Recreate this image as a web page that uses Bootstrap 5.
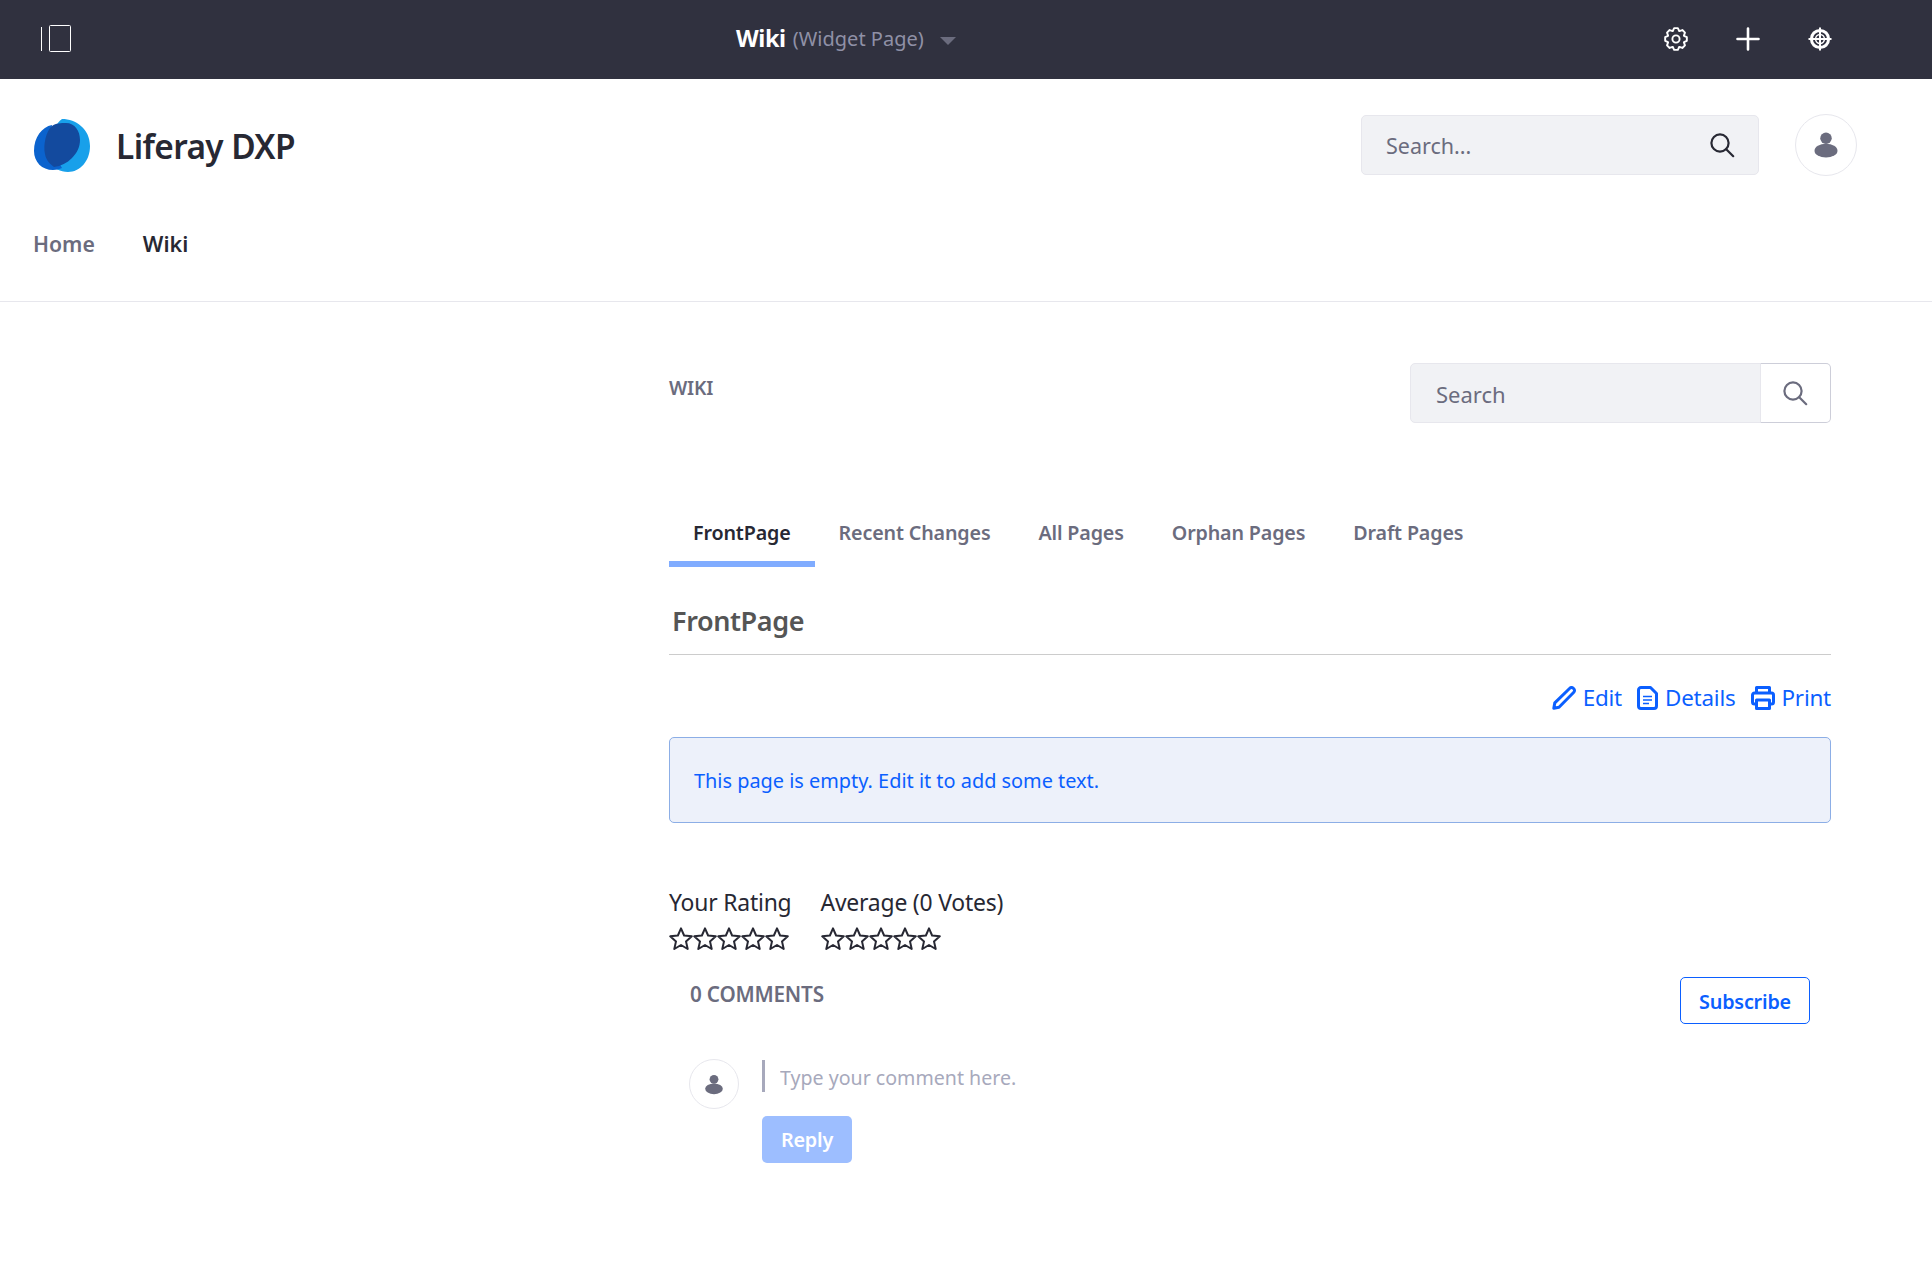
<!DOCTYPE html>
<html lang="en">
<head>
    <meta charset="UTF-8">
    <title>Wiki - Liferay DXP</title>
    <link href="https://cdn.jsdelivr.net/npm/bootstrap@5.3.0/dist/css/bootstrap.min.css" rel="stylesheet">
    <script src="https://cdn.jsdelivr.net/npm/bootstrap@5.3.0/dist/js/bootstrap.bundle.min.js"></script>
    <style>
        body {
            font-family: "Noto Sans", "Open Sans", sans-serif;
            font-size: 20px;
            color: #272833;
            background: #fff;
        }
        .admin-bar {
            height: 79px;
            background: #30313f;
            padding: 0 100px 1px 41px;
        }
        .admin-toggle { width: 695px; }
        .admin-title { color: #fff; font-weight: 700; font-size: 23.5px; letter-spacing: -.4px; }
        .admin-sub { color: #8f90a6; font-size: 20px; margin-left: 7px; }
        .admin-caret {
            width: 0;
            height: 0;
            margin-left: 16px;
            margin-top: 3px;
            border-left: 8px solid transparent;
            border-right: 8px solid transparent;
            border-top: 8px solid #6b6c7e;
        }
        .admin-icons { gap: 48px; }
        .site-header {
            height: 223px;
            border-bottom: 1px solid #e7e7ed;
            padding: 35px 75px 0 34px;
        }
        .site-top { height: 62px; }
        .site-name { font-size: 33.4px; font-weight: 600; margin: 3px 0 0 26px; letter-spacing: -.6px; color: #272833; }
        .search-field {
            width: 398px;
            height: 60px;
            background: #f1f2f5;
            border: 1px solid #e7e7ed;
            border-radius: 5px;
            padding: 0 23px 0 24px;
            margin-right: 36px;
            color: #6b6c7e;
        }
        .avatar-ring {
            width: 62px;
            height: 62px;
            border-radius: 50%;
            border: 1px solid #e7e7ed;
            background: #fff;
        }
        .avatar-ring.avatar-small { width: 50px; height: 50px; }
        .site-nav { margin: 53px 0 0 -1px; gap: 48px; }
        .site-nav .nav-link { padding: 0; color: #6b6c7e; font-weight: 600; font-size: 21.2px; line-height: 30px; }
        .site-nav .nav-link.active { color: #272833; font-size: 21.6px; }
        .wiki-main { padding: 61px 101px 100px 669px; }
        .wiki-label { font-size: 19.2px; font-weight: 600; color: #6b6c7e; line-height: 50px; letter-spacing: -.2px; }
        .wiki-search { width: 421px; height: 60px; }
        .wiki-search .form-control {
            background: #f1f2f5;
            border-color: #e7e7ed;
            border-radius: 5px 0 0 5px;
            padding: 2px 0 0 25px;
            font-size: 22px;
            color: #6b6c7e;
            box-shadow: none;
        }
        .wiki-search .form-control::placeholder,
        .search-field .form-control::placeholder { color: #6b6c7e; opacity: 1; }
        .search-field .form-control {
            background: transparent;
            border: 0;
            padding: 2px 0 0;
            font-size: 21.5px;
            box-shadow: none;
        }
        .wiki-search .btn {
            width: 71px;
            padding: 0 2px 0 0;
            border: 1px solid #cdced9;
            border-left-color: #e7e7ed;
            border-radius: 0 5px 5px 0;
            background: #fff;
        }
        .wiki-tabs { margin-top: 78px; }
        .wiki-tabs .nav-link {
            padding: 17px 24px 13px;
            line-height: 30px;
            border-bottom: 6px solid transparent;
            border-radius: 0;
            color: #6b6c7e;
            font-weight: 600;
            font-size: 19.7px;
            letter-spacing: -.15px;
        }
        .wiki-tabs .nav-link.active { color: #272833; border-bottom-color: #80acff; }
        .page-title {
            margin: 0;
            padding: 35px 3px 14px;
            line-height: 38px;
            font-size: 27px;
            font-weight: 600;
            letter-spacing: -.4px;
            color: #555;
            border-bottom: 1px solid #ccc;
        }
        .page-actions { margin-top: 26px; height: 34px; gap: 15px; }
        .page-actions a { color: #0b5fff; text-decoration: none; gap: 7px; font-size: 22.4px; letter-spacing: -.2px; line-height: 34px; }
        .empty-note {
            margin: 22px 0 0;
            height: 86px;
            padding: 1px 24px 0;
            background: #edf1fa;
            border: 1px solid #8caee6;
            border-radius: 5px;
            color: #0b5fff;
            font-size: 19.9px;
        }
        .rating-row { margin-top: 65px; gap: 29px; }
        .rating-label { font-size: 22.9px; line-height: 30px; letter-spacing: -.2px; }
        .rating-stars { margin-top: 9px; height: 24px; }
        .comments-row { margin-top: 26px; padding: 0 21px; }
        .comments-count { font-size: 20.7px; font-weight: 600; color: #6b6c7e; line-height: 30px; margin-top: 2px; letter-spacing: -.2px; }
        .btn-subscribe {
            width: 130px;
            height: 47px;
            padding: 2px 0 0;
            border: 1px solid #0b5fff;
            border-radius: 5px;
            color: #0b5fff;
            font-weight: 600;
            font-size: 19.8px;
            letter-spacing: -.2px;
            background: #fff;
        }
        .comment-box { margin-top: 35px; padding-left: 20px; }
        .comment-body { margin-left: 23px; }
        .comment-field {
            width: 400px;
            height: 32px;
            margin-top: 1px;
            padding: 2px 0 0 15px;
            border: 0;
            border-left: 3px solid #a7a9bc;
            border-radius: 0;
            font-size: 19.6px;
            line-height: 30px;
            box-shadow: none;
        }
        .comment-field::placeholder { color: #a7a9bc; opacity: 1; }
        .btn-reply,
        .btn-reply:disabled {
            display: block;
            width: 90px;
            height: 47px;
            margin-top: 24px;
            padding: 0;
            border: 0;
            border-radius: 5px;
            background: #9dbeff;
            color: #fff;
            font-weight: 600;
            font-size: 19.8px;
            letter-spacing: -.2px;
            opacity: 1;
        }
    </style>
</head>
<body>
    <svg width="0" height="0" class="d-none">
        <symbol id="ico-star" viewBox="0 0 24 24">
            <path d="M12 1.4l3.1 7.1 7.7.8-5.8 5.1 1.7 7.6-6.7-4-6.7 4 1.7-7.6-5.8-5.1 7.7-.8z" fill="none" stroke="#272833" stroke-width="2" stroke-linejoin="round"/>
        </symbol>
        <symbol id="ico-person" viewBox="0 0 24 24">
            <circle cx="12" cy="5.8" r="5.3" fill="#6b6c7e"/>
            <ellipse cx="12" cy="17.2" rx="10.6" ry="6.4" fill="#6b6c7e"/>
        </symbol>
    </svg>

    <!-- admin control bar -->
    <div class="admin-bar d-flex align-items-center">
        <div class="admin-toggle d-flex">
            <svg width="31" height="28" viewBox="0 0 31 28" fill="none" stroke="#fff">
                <path d="M.5 2v24"/>
                <rect x="8.5" y=".5" width="21" height="26" rx="1"/>
            </svg>
        </div>
        <span class="admin-title">Wiki</span>
        <span class="admin-sub">(Widget Page)</span>
        <span class="admin-caret"></span>
        <div class="admin-icons d-flex ms-auto">
            <svg width="24" height="24" viewBox="0 0 24 24" fill="none" stroke="#fff" stroke-width="1.9" stroke-linejoin="round">
                <path id="gearPath"/>
                <circle cx="12" cy="12" r="3.6"/>
            </svg>
            <svg width="24" height="24" viewBox="0 0 24 24" fill="none" stroke="#fff" stroke-width="2.6" stroke-linecap="round">
                <path d="M12 1.5v21M1.5 12h21"/>
            </svg>
            <svg width="24" height="24" viewBox="0 0 24 24" fill="none" stroke="#fff">
                <circle cx="12" cy="12" r="8.6" stroke-width="3"/>
                <circle cx="12" cy="12" r="4.4" stroke-width="1.5"/>
                <path d="M12 .5v23M.5 12h23" stroke-width="2"/>
            </svg>
        </div>
    </div>

    <!-- site header -->
    <header class="site-header">
        <div class="site-top d-flex align-items-center">
            <svg width="56" height="53" viewBox="0 0 56 53">
                <path d="M28 0C42 0 56 10 56 27c0 15-10 26-22 26-8 0-14-4-17-9C20 20 17 8 28 0z" fill="#18a0ea"/>
                <path d="M18 6C8 8 0 18 0 32c0 11 8 19 19 19 4 0 6-1 9-2C20 36 16 18 18 6z" fill="#0b63ce"/>
                <path d="M18 7c4-3 9-3 14-3 9 0 14 8 14 17 0 7-3 13-8 18-5 5-11 8-18 9-4-3-8-7-9-13C9 26 12 12 18 7z" fill="#134a9e"/>
            </svg>
            <a href="#" class="site-name text-decoration-none">Liferay DXP</a>
            <div class="search-field d-flex align-items-center ms-auto">
                <input type="text" class="form-control" placeholder="Search...">
                <svg width="26" height="26" viewBox="0 0 26 26" fill="none" stroke="#272833" stroke-width="2.2" class="flex-shrink-0">
                    <circle cx="11" cy="11" r="8.6"/>
                    <path d="M17.2 17.2l7 7" stroke-linecap="round"/>
                </svg>
            </div>
            <div class="avatar-ring d-flex align-items-center justify-content-center flex-shrink-0">
                <svg width="26" height="30"><use href="#ico-person"/></svg>
            </div>
        </div>
        <nav class="site-nav nav">
            <a class="nav-link" href="#">Home</a>
            <a class="nav-link active" href="#">Wiki</a>
        </nav>
    </header>

    <main class="wiki-main">
        <div class="d-flex justify-content-between align-items-start">
            <div class="wiki-label">WIKI</div>
            <div class="wiki-search input-group">
                <input type="text" class="form-control" placeholder="Search">
                <button class="btn d-flex align-items-center justify-content-center" type="button" aria-label="Search">
                    <svg width="26" height="26" viewBox="0 0 26 26" fill="none" stroke="#6b6c7e" stroke-width="2.2">
                        <circle cx="11" cy="11" r="8.6"/>
                        <path d="M17.2 17.2l7 7" stroke-linecap="round"/>
                    </svg>
                </button>
            </div>
        </div>

        <ul class="wiki-tabs nav">
            <li class="nav-item"><a class="nav-link active" href="#">FrontPage</a></li>
            <li class="nav-item"><a class="nav-link" href="#">Recent Changes</a></li>
            <li class="nav-item"><a class="nav-link" href="#">All Pages</a></li>
            <li class="nav-item"><a class="nav-link" href="#">Orphan Pages</a></li>
            <li class="nav-item"><a class="nav-link" href="#">Draft Pages</a></li>
        </ul>

        <h2 class="page-title">FrontPage</h2>

        <div class="page-actions d-flex justify-content-end">
            <a href="#" class="d-flex align-items-center">
                <svg width="24" height="24" viewBox="0 0 24 24" fill="none" stroke="#0b5fff" stroke-width="3" stroke-linejoin="round">
                    <path d="M1.8 22.2l1-5.3L17.8 2.2a2.4 2.4 0 0 1 3.4 0l.6.6a2.4 2.4 0 0 1 0 3.4L7 21.2z"/>
                </svg>
                Edit
            </a>
            <a href="#" class="d-flex align-items-center">
                <svg width="21" height="24" viewBox="0 0 21 24" fill="none" stroke="#0b5fff" stroke-width="3" stroke-linejoin="round">
                    <path d="M4 1.5h9.5l6 6V20a2.5 2.5 0 0 1-2.5 2.5H4A2.5 2.5 0 0 1 1.5 20V4A2.5 2.5 0 0 1 4 1.5z"/>
                    <path d="M6 10.5h9M6 14h9M6 17.5h6" stroke-width="1.7"/>
                </svg>
                Details
            </a>
            <a href="#" class="d-flex align-items-center">
                <svg width="24" height="24" viewBox="0 0 24 24" fill="none" stroke="#0b5fff" stroke-width="3" stroke-linejoin="round">
                    <path d="M5.5 7V1.5h13V7"/>
                    <path d="M5.5 18H3.5a2 2 0 0 1-2-2V9a2 2 0 0 1 2-2h17a2 2 0 0 1 2 2v7a2 2 0 0 1-2 2h-2"/>
                    <path d="M5.5 14h13v8.5h-13z"/>
                </svg>
                Print
            </a>
        </div>

        <div class="empty-note alert d-flex align-items-center" role="alert">This page is empty. Edit it to add some text.</div>

        <div class="rating-row d-flex">
            <div>
                <div class="rating-label">Your Rating</div>
                <div class="rating-stars d-flex" data-stars></div>
            </div>
            <div>
                <div class="rating-label">Average (0 Votes)</div>
                <div class="rating-stars d-flex" data-stars></div>
            </div>
        </div>

        <div class="comments-row d-flex justify-content-between align-items-start">
            <div class="comments-count">0 COMMENTS</div>
            <button type="button" class="btn btn-subscribe">Subscribe</button>
        </div>

        <div class="comment-box d-flex align-items-start">
            <div class="avatar-ring avatar-small d-flex align-items-center justify-content-center flex-shrink-0">
                <svg width="20" height="23"><use href="#ico-person"/></svg>
            </div>
            <div class="comment-body">
                <input type="text" class="comment-field form-control" placeholder="Type your comment here.">
                <button type="button" class="btn btn-reply" disabled>Reply</button>
            </div>
        </div>
    </main>

    <script>
        // five outlined stars per rating
        document.querySelectorAll('[data-stars]').forEach(row => {
            row.innerHTML = '<svg width="24" height="24"><use href="#ico-star"/></svg>'.repeat(5);
        });

        // cog outline, 8 teeth
        let d = '';
        for (let k = 0; k < 8; k++) {
            const a = k * Math.PI / 4;
            [[-.38, 8.6], [-.17, 11], [.17, 11], [.38, 8.6]].forEach(([off, r]) => {
                const x = 12 + r * Math.cos(a + off);
                const y = 12 + r * Math.sin(a + off);
                d += (d ? 'L' : 'M') + x.toFixed(2) + ' ' + y.toFixed(2);
            });
        }
        document.getElementById('gearPath').setAttribute('d', d + 'Z');
    </script>
</body>
</html>
